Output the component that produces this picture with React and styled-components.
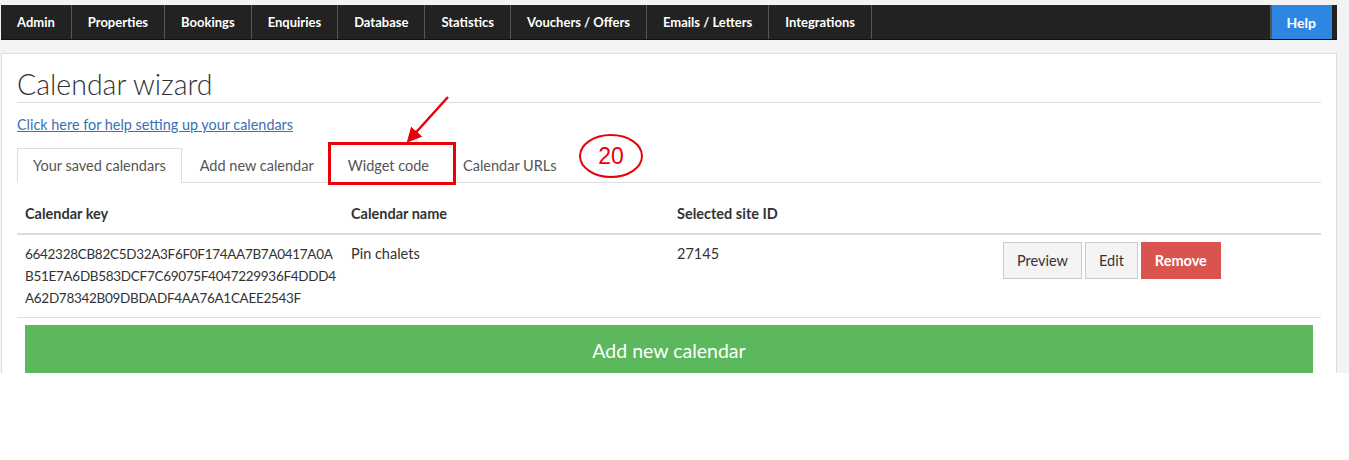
import React from "react";
import styled, { createGlobalStyle } from "styled-components";

const GlobalStyle = createGlobalStyle`
  html, body {
    margin: 0;
    padding: 0;
    background: #ffffff;
  }
  body {
    font-family: Lato, "Noto Sans", "Liberation Sans", sans-serif;
    color: #333;
  }
`;

const Page = styled.div`
  height: 373px;
  overflow: hidden;
  background: #f3f3f3;
  padding: 5px 12px 0 1px;
  box-sizing: border-box;
`;

const NavBar = styled.nav`
  height: 35px;
  background: #222;
  display: flex;
  align-items: stretch;
  border-bottom: 1px solid #111;
  box-sizing: border-box;
`;

const NavItem = styled.a`
  display: flex;
  align-items: center;
  padding: 0 16px;
  color: #fff;
  font-size: 13px;
  font-weight: 700;
  text-decoration: none;
  border-right: 1px solid #555;
`;

const HelpItem = styled(NavItem)`
  margin-left: auto;
  margin-right: 5px;
  background: #2d87e2;
  border-right: none;
  border-left: 2px solid #555;
  padding: 0 16px 0 15px;
  font-size: 14px;
`;

const Panel = styled.section`
  position: relative;
  margin-top: 13px;
  background: #fff;
  border: 1px solid #ddd;
  padding: 15px 15px 0;
  height: 400px;
`;

const Title = styled.h1`
  margin: 0;
  padding-bottom: 2px;
  font-size: 28.5px;
  font-weight: 300;
  line-height: 31px;
  color: #333;
  border-bottom: 1px solid #ddd;
`;

const HelpLink = styled.a`
  display: inline-block;
  margin-top: 12px;
  font-size: 14.4px;
  line-height: 20px;
  color: #3b6fb6;
  text-decoration: underline;
`;

const Tabs = styled.ul`
  display: flex;
  list-style: none;
  margin: 13px 0 0;
  padding: 0;
  border-bottom: 1px solid #ddd;
`;

const Tab = styled.li`
  position: relative;
  margin-right: 2px;
  margin-bottom: -1px;
  padding: 6px 15px;
  font-size: 14.5px;
  line-height: 21px;
  color: #555;
  border: 1px solid ${(p) => (p.$active ? "#ddd" : "transparent")};
  border-bottom-color: ${(p) => (p.$active ? "#fff" : "transparent")};
  background: ${(p) => (p.$active ? "#fff" : "transparent")};
`;

const Highlight = styled.span`
  position: absolute;
  z-index: 2;
  left: -5px;
  right: -12px;
  top: -7px;
  bottom: -3px;
  border: 3px solid #e8000b;
`;

const Table = styled.div`
  margin-top: 12px;
  display: grid;
  grid-template-columns: repeat(4, minmax(0, 1fr));
  font-size: 14.5px;
  line-height: 22px;
`;

const HeadCell = styled.div`
  padding: 8px;
  font-weight: 700;
  color: #333;
  border-bottom: 2px solid #ddd;
`;

const Cell = styled.div`
  padding: 8px;
  color: #333;
  border-bottom: 1px solid #ddd;
`;

const KeyLine = styled.span`
  display: block;
  font-size: 13.5px;
  letter-spacing: -0.3px;
`;

const Actions = styled(Cell)`
  display: flex;
  gap: 3px;
  align-items: flex-start;
  padding-top: 7px;
`;

const Button = styled.button`
  font-family: inherit;
  font-size: 14.5px;
  line-height: 21px;
  padding: 7px 13px;
  border: 1px solid ${(p) => (p.$danger ? "#d9534f" : "#ccc")};
  background: ${(p) => (p.$danger ? "#d9534f" : "#f4f4f4")};
  color: ${(p) => (p.$danger ? "#fff" : "#333")};
  font-weight: ${(p) => (p.$danger ? 700 : 400)};
  border-radius: 0;
`;

const FullRow = styled.div`
  grid-column: 1 / -1;
  padding: 7px 8px;
`;

const AddButton = styled.button`
  width: 100%;
  height: 50px;
  border: none;
  background: #5cb85c;
  color: #fff;
  font-family: inherit;
  font-size: 19.5px;
`;

const Annotation = styled.svg`
  position: absolute;
  left: 0;
  top: 0;
  pointer-events: none;
`;

const navItems = [
  "Admin",
  "Properties",
  "Bookings",
  "Enquiries",
  "Database",
  "Statistics",
  "Vouchers / Offers",
  "Emails / Letters",
  "Integrations",
];

const keyLines = [
  "6642328CB82C5D32A3F6F0F174AA7B7A0417A0A",
  "B51E7A6DB583DCF7C69075F4047229936F4DDD4",
  "A62D78342B09DBDADF4AA76A1CAEE2543F",
];

export default function App() {
  return (
    <>
      <GlobalStyle />
      <Page>
        <NavBar>
          {navItems.map((n) => (
            <NavItem key={n}>{n}</NavItem>
          ))}
          <HelpItem>Help</HelpItem>
        </NavBar>
        <Panel>
          <Title>Calendar wizard</Title>
          <HelpLink href="#">Click here for help setting up your calendars</HelpLink>
          <Tabs>
            <Tab $active>Your saved calendars</Tab>
            <Tab>Add new calendar</Tab>
            <Tab>
              Widget code
              <Highlight />
            </Tab>
            <Tab>Calendar URLs</Tab>
          </Tabs>
          <Table>
            <HeadCell>Calendar key</HeadCell>
            <HeadCell>Calendar name</HeadCell>
            <HeadCell>Selected site ID</HeadCell>
            <HeadCell />
            <Cell>
              {keyLines.map((l) => (
                <KeyLine key={l}>{l}</KeyLine>
              ))}
            </Cell>
            <Cell>Pin chalets</Cell>
            <Cell>27145</Cell>
            <Actions>
              <Button>Preview</Button>
              <Button>Edit</Button>
              <Button $danger>Remove</Button>
            </Actions>
            <FullRow>
              <AddButton>Add new calendar</AddButton>
            </FullRow>
          </Table>
          <Annotation width="700" height="200">
            <defs>
              <marker
                id="arrowhead"
                markerWidth="6"
                markerHeight="6"
                refX="4"
                refY="3"
                orient="auto"
              >
                <path d="M0,0 L6,3 L0,6 Z" fill="#e8000b" />
              </marker>
            </defs>
            <line
              x1="446"
              y1="43"
              x2="408"
              y2="85"
              stroke="#e8000b"
              strokeWidth="2.5"
              markerEnd="url(#arrowhead)"
            />
            <ellipse
              cx="609"
              cy="102"
              rx="31"
              ry="21"
              fill="none"
              stroke="#e8000b"
              strokeWidth="2"
            />
            <text
              x="609"
              y="110"
              textAnchor="middle"
              fontSize="23"
              fontFamily="Liberation Sans, sans-serif"
              fill="#e8000b"
            >
              20
            </text>
          </Annotation>
        </Panel>
      </Page>
    </>
  );
}
